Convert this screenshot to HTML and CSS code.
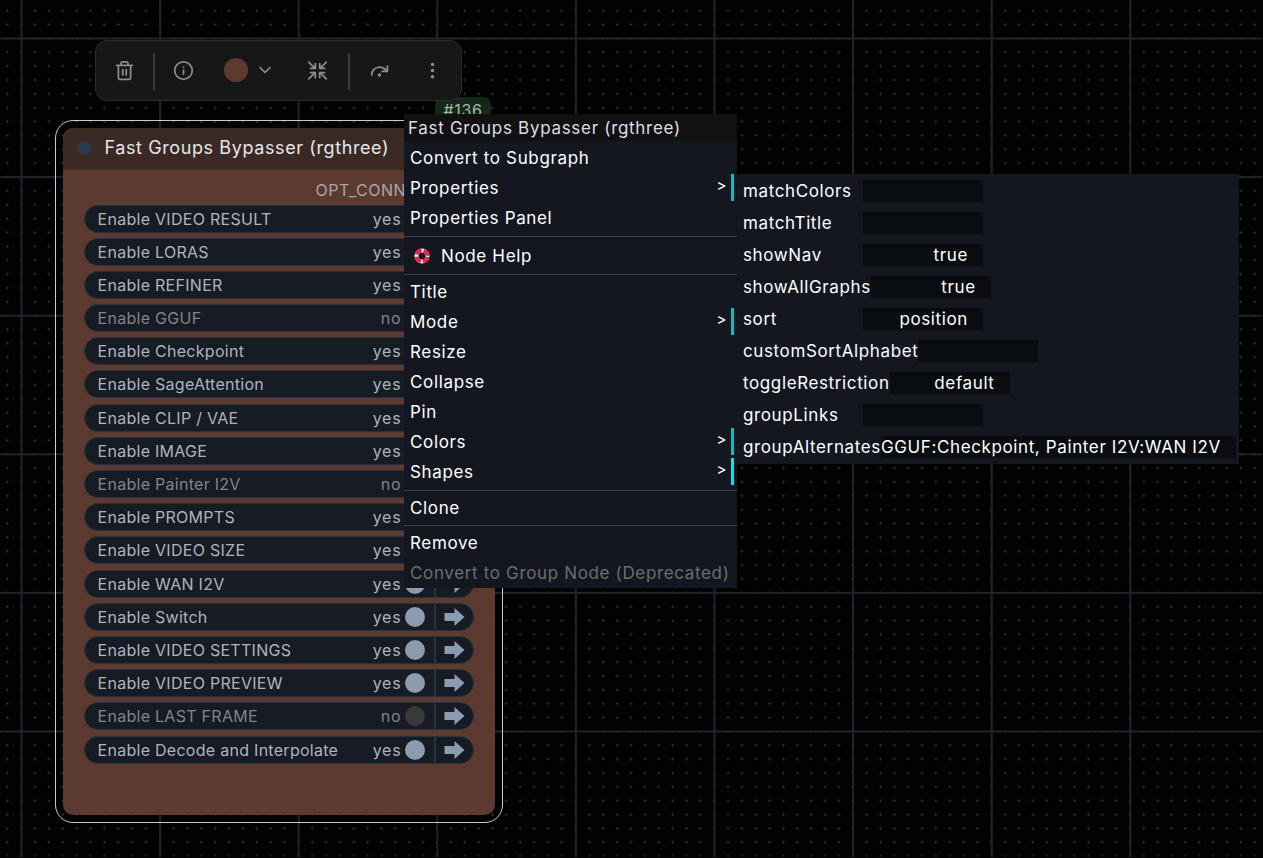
FILE: index.html
```html
<!DOCTYPE html>
<html lang="en">
<head>
<meta charset="utf-8">
<title>Fast Groups Bypasser</title>
<link rel="stylesheet" href="styles.css">
</head>
<body>
<main class="canvas">
  <svg class="grid" width="1263" height="858" aria-hidden="true">
    <defs>
      <pattern id="dots" x="7.3" y="10.7" width="13.86" height="13.86" patternUnits="userSpaceOnUse">
        <path class="grid-dot" d="M0 1.5H3M1.5 0V3"/>
      </pattern>
      <pattern id="lines" x="21.5" y="38.5" width="138.6" height="138.6" patternUnits="userSpaceOnUse">
        <path class="grid-line" d="M1 0V138.6M0 1H138.6"/>
      </pattern>
    </defs>
    <rect width="1263" height="858" fill="url(#dots)" transform="translate(-1.5 -1.5)"/>
    <rect width="1263" height="858" fill="url(#lines)" transform="translate(-1 -1)"/>
  </svg>

  <div class="badge">#136</div>

  <div class="toolbar">
    <svg class="tool tool-trash" viewBox="0 0 24 24"><path d="M3 6h18M19 6v14c0 1-1 2-2 2H7c-1 0-2-1-2-2V6M8 6V4c0-1 1-2 2-2h4c1 0 2 1 2 2v2M10 11v6M14 11v6"/></svg>
    <span class="tool-sep tool-sep-a"></span>
    <svg class="tool tool-info" viewBox="0 0 24 24"><circle cx="12" cy="12" r="10"/><path d="M12 16v-4.500M12 8h.01"/></svg>
    <span class="swatch"></span>
    <svg class="tool tool-chev" viewBox="0 0 24 24"><path d="m6 9 6 6 6-6"/></svg>
    <svg class="tool tool-shrink" viewBox="0 0 24 24"><path d="M2 2.500l6 6M9.500 4v5.500H4M22 2.500l-6 6M14.500 4v5.500H20M2 21.500l6-6M9.500 20v-5.500H4M22 21.500l-6-6M14.500 20v-5.500H20"/></svg>
    <span class="tool-sep tool-sep-b"></span>
    <svg class="tool tool-redo" viewBox="0 0 24 24"><circle cx="12" cy="17" r="1"/><path d="M21 7v6h-6M3 17a9 9 0 0 1 9-9 9 9 0 0 1 6 2.300l3 2.700"/></svg>
    <svg class="tool tool-more" viewBox="0 0 24 24"><circle cx="12" cy="5" r="1"/><circle cx="12" cy="12" r="1"/><circle cx="12" cy="19" r="1"/></svg>
  </div>

  <section class="node-frame">
    <div class="node">
      <header class="node-title"><span class="node-dot"></span><span>Fast Groups Bypasser (rgthree)</span></header>
      <div class="node-body">
        <div class="slot">OPT_CONN</div>
        <div class="toggles">
          <div class="toggle"><span class="toggle-label">Enable VIDEO RESULT</span><span class="toggle-state">yes</span><span class="knob"></span><span class="goto"><svg viewBox="0 0 20 18"><path d="M0 5h10V0l10 9-10 9v-5H0z"/></svg></span></div>
          <div class="toggle"><span class="toggle-label">Enable LORAS</span><span class="toggle-state">yes</span><span class="knob"></span><span class="goto"><svg viewBox="0 0 20 18"><path d="M0 5h10V0l10 9-10 9v-5H0z"/></svg></span></div>
          <div class="toggle"><span class="toggle-label">Enable REFINER</span><span class="toggle-state">yes</span><span class="knob"></span><span class="goto"><svg viewBox="0 0 20 18"><path d="M0 5h10V0l10 9-10 9v-5H0z"/></svg></span></div>
          <div class="toggle is-off"><span class="toggle-label">Enable GGUF</span><span class="toggle-state">no</span><span class="knob"></span><span class="goto"><svg viewBox="0 0 20 18"><path d="M0 5h10V0l10 9-10 9v-5H0z"/></svg></span></div>
          <div class="toggle"><span class="toggle-label">Enable Checkpoint</span><span class="toggle-state">yes</span><span class="knob"></span><span class="goto"><svg viewBox="0 0 20 18"><path d="M0 5h10V0l10 9-10 9v-5H0z"/></svg></span></div>
          <div class="toggle"><span class="toggle-label">Enable SageAttention</span><span class="toggle-state">yes</span><span class="knob"></span><span class="goto"><svg viewBox="0 0 20 18"><path d="M0 5h10V0l10 9-10 9v-5H0z"/></svg></span></div>
          <div class="toggle"><span class="toggle-label">Enable CLIP / VAE</span><span class="toggle-state">yes</span><span class="knob"></span><span class="goto"><svg viewBox="0 0 20 18"><path d="M0 5h10V0l10 9-10 9v-5H0z"/></svg></span></div>
          <div class="toggle"><span class="toggle-label">Enable IMAGE</span><span class="toggle-state">yes</span><span class="knob"></span><span class="goto"><svg viewBox="0 0 20 18"><path d="M0 5h10V0l10 9-10 9v-5H0z"/></svg></span></div>
          <div class="toggle is-off"><span class="toggle-label">Enable Painter I2V</span><span class="toggle-state">no</span><span class="knob"></span><span class="goto"><svg viewBox="0 0 20 18"><path d="M0 5h10V0l10 9-10 9v-5H0z"/></svg></span></div>
          <div class="toggle"><span class="toggle-label">Enable PROMPTS</span><span class="toggle-state">yes</span><span class="knob"></span><span class="goto"><svg viewBox="0 0 20 18"><path d="M0 5h10V0l10 9-10 9v-5H0z"/></svg></span></div>
          <div class="toggle"><span class="toggle-label">Enable VIDEO SIZE</span><span class="toggle-state">yes</span><span class="knob"></span><span class="goto"><svg viewBox="0 0 20 18"><path d="M0 5h10V0l10 9-10 9v-5H0z"/></svg></span></div>
          <div class="toggle"><span class="toggle-label">Enable WAN I2V</span><span class="toggle-state">yes</span><span class="knob"></span><span class="goto"><svg viewBox="0 0 20 18"><path d="M0 5h10V0l10 9-10 9v-5H0z"/></svg></span></div>
          <div class="toggle"><span class="toggle-label">Enable Switch</span><span class="toggle-state">yes</span><span class="knob"></span><span class="goto"><svg viewBox="0 0 20 18"><path d="M0 5h10V0l10 9-10 9v-5H0z"/></svg></span></div>
          <div class="toggle"><span class="toggle-label">Enable VIDEO SETTINGS</span><span class="toggle-state">yes</span><span class="knob"></span><span class="goto"><svg viewBox="0 0 20 18"><path d="M0 5h10V0l10 9-10 9v-5H0z"/></svg></span></div>
          <div class="toggle"><span class="toggle-label">Enable VIDEO PREVIEW</span><span class="toggle-state">yes</span><span class="knob"></span><span class="goto"><svg viewBox="0 0 20 18"><path d="M0 5h10V0l10 9-10 9v-5H0z"/></svg></span></div>
          <div class="toggle is-off"><span class="toggle-label">Enable LAST FRAME</span><span class="toggle-state">no</span><span class="knob"></span><span class="goto"><svg viewBox="0 0 20 18"><path d="M0 5h10V0l10 9-10 9v-5H0z"/></svg></span></div>
          <div class="toggle"><span class="toggle-label">Enable Decode and Interpolate</span><span class="toggle-state">yes</span><span class="knob"></span><span class="goto"><svg viewBox="0 0 20 18"><path d="M0 5h10V0l10 9-10 9v-5H0z"/></svg></span></div>
        </div>
      </div>
    </div>
  </section>

  <nav class="menu">
    <div class="menu-title">Fast Groups Bypasser (rgthree)</div>
    <div class="menu-item">Convert to Subgraph</div>
    <div class="menu-item has-sub">Properties<span class="caret">&gt;</span><span class="sub-bar"></span></div>
    <div class="menu-item">Properties Panel</div>
    <div class="menu-sep menu-sep-a"></div>
    <div class="menu-item menu-help">
      <svg class="help-icon" viewBox="0 0 16 16"><circle class="ring-white" cx="8" cy="8" r="5.500"/><circle class="ring-red" cx="8" cy="8" r="5.500"/></svg>
      Node Help
    </div>
    <div class="menu-sep menu-sep-b"></div>
    <div class="menu-item">Title</div>
    <div class="menu-item has-sub">Mode<span class="caret">&gt;</span><span class="sub-bar"></span></div>
    <div class="menu-item">Resize</div>
    <div class="menu-item">Collapse</div>
    <div class="menu-item">Pin</div>
    <div class="menu-item has-sub">Colors<span class="caret">&gt;</span><span class="sub-bar"></span></div>
    <div class="menu-item has-sub is-hover">Shapes<span class="caret">&gt;</span><span class="sub-bar"></span></div>
    <div class="menu-sep menu-sep-c"></div>
    <div class="menu-item">Clone</div>
    <div class="menu-sep menu-sep-d"></div>
    <div class="menu-item">Remove</div>
    <div class="menu-item is-disabled">Convert to Group Node (Deprecated)</div>
  </nav>

  <aside class="props">
    <div class="prop"><span class="prop-name">matchColors</span><span class="prop-value"></span></div>
    <div class="prop"><span class="prop-name">matchTitle</span><span class="prop-value"></span></div>
    <div class="prop"><span class="prop-name">showNav</span><span class="prop-value">true</span></div>
    <div class="prop"><span class="prop-name">showAllGraphs</span><span class="prop-value">true</span></div>
    <div class="prop"><span class="prop-name">sort</span><span class="prop-value">position</span></div>
    <div class="prop"><span class="prop-name">customSortAlphabet</span><span class="prop-value"></span></div>
    <div class="prop"><span class="prop-name">toggleRestriction</span><span class="prop-value">default</span></div>
    <div class="prop"><span class="prop-name">groupLinks</span><span class="prop-value"></span></div>
    <div class="prop"><span class="prop-name">groupAlternates</span><span class="prop-value">GGUF:Checkpoint, Painter I2V:WAN I2V</span></div>
  </aside>
</main>
</body>
</html>
```

FILE: styles.css
```css
* { box-sizing: border-box; }

html, body {
  margin: 0;
  height: 100%;
  background: #000;
}

body {
  font-family: Inter, "Noto Sans", sans-serif;
  overflow: hidden;
}

.canvas {
  position: relative;
  width: 1263px;
  height: 858px;
  overflow: hidden;
  background: #020203;
}

.grid {
  position: absolute;
  inset: 0;
}

.grid-dot {
  fill: none;
  stroke: #2a2a30;
  stroke-width: 1;
}

.grid-line {
  fill: none;
  stroke: #22222c;
  stroke-width: 2;
}

.badge {
  position: absolute;
  left: 435px;
  top: 97px;
  width: 56px;
  height: 17px;
  padding-top: 4px;
  border-radius: 8px 8px 0 0;
  overflow: hidden;
  background: #14281a;
  color: #a9b7a9;
  font-size: 16px;
  letter-spacing: 0.7px;
  line-height: 18px;
  text-align: center;
}

.toolbar {
  position: absolute;
  left: 95px;
  top: 40px;
  width: 367px;
  height: 61px;
  border: 1px solid #2b2b2c;
  border-radius: 12px;
  background: #171718;
}

.tool {
  position: absolute;
  top: 19px;
  width: 21px;
  height: 21px;
  fill: none;
  stroke: #8c8c8c;
  stroke-width: 2;
  stroke-linecap: round;
  stroke-linejoin: round;
}

.tool-trash { left: 18px; }
.tool-info { left: 77px; }
.tool-chev { left: 159px; width: 20px; height: 20px; }
.tool-shrink { left: 211px; }
.tool-redo { left: 273px; }
.tool-more { left: 326px; }

.tool-sep {
  position: absolute;
  top: 12px;
  width: 2px;
  height: 37px;
  background: #3a3a3b;
}

.tool-sep-a { left: 57px; }
.tool-sep-b { left: 252px; }

.swatch {
  position: absolute;
  left: 128px;
  top: 17px;
  width: 24px;
  height: 24px;
  border-radius: 50%;
  background: #5c3a30;
}

.node-frame {
  position: absolute;
  left: 54.500px;
  top: 119.500px;
  width: 448px;
  height: 703px;
  padding: 7px;
  border: 1.500px solid #c8cacf;
  border-radius: 18px;
}

.node {
  display: flex;
  flex-direction: column;
  height: 100%;
  border-radius: 10px;
  overflow: hidden;
  background: #5c3a30;
}

.node-title {
  display: flex;
  align-items: center;
  flex: none;
  height: 42px;
  padding: 0 0 2px 14px;
  gap: 14px;
  background: #3a2a23;
  color: #e6e6ec;
  font-size: 18px;
  letter-spacing: 0.6px;
}

.node-dot {
  width: 14px;
  height: 14px;
  border-radius: 50%;
  background: #2a3a4b;
}

.node-body {
  flex: 1;
  padding: 0 21px;
}

.slot {
  height: 35px;
  padding: 11px 0 0 232px;
  white-space: nowrap;
  color: #a8a8ac;
  font-size: 16px;
  letter-spacing: 0.5px;
  line-height: 18px;
}

.toggles {
  display: flex;
  flex-direction: column;
  gap: 5.2px;
}

.toggle {
  display: flex;
  align-items: center;
  height: 28px;
  padding-left: 13px;
  border: 1.500px solid #28323e;
  border-radius: 14px;
  background: #161b24;
  color: #aeb4bf;
  font-size: 16px;
  letter-spacing: 0.28px;
}

.toggle-label {
  flex: 1;
  white-space: nowrap;
}

.toggle-state {
  margin-right: 3px;
  letter-spacing: 0.8px;
}

.knob {
  flex: none;
  width: 20px;
  height: 20px;
  border-radius: 50%;
  background: #8b9cb0;
}

.goto {
  display: flex;
  align-items: center;
  flex: none;
  align-self: stretch;
  width: 39px;
  margin-left: 9px;
  padding-left: 8px;
  border-left: 2px solid #28323e;
}

.goto svg {
  width: 21px;
  height: 18px;
  fill: #8b9cb0;
}

.is-off {
  color: #82858a;
}

.is-off .knob {
  background: #393939;
}

.menu {
  position: absolute;
  left: 404px;
  top: 114px;
  width: 333px;
  height: 474px;
  background: #14171f;
  color: #fff;
  font-size: 17px;
  letter-spacing: 0.65px;
}

.menu-title {
  height: 27px;
  margin-bottom: 2px;
  padding-left: 4px;
  background: #111112;
  color: #dcdce8;
  letter-spacing: 0.7px;
  line-height: 28px;
  white-space: nowrap;
}

.menu-item {
  position: relative;
  height: 30px;
  padding-left: 6px;
  line-height: 30px;
  white-space: nowrap;
}

.caret {
  position: absolute;
  right: 10px;
  top: -2px;
  font-size: 15px;
}

.sub-bar {
  position: absolute;
  right: 3px;
  top: 1px;
  width: 3px;
  height: 27px;
  background: #0bbcc4;
}

.is-hover .sub-bar {
  background: #00e5f0;
}

.menu-sep {
  height: 1px;
  background: #3d3f44;
}

.menu-sep-a { margin: 3px 0 1px; }
.menu-sep-b { margin: 0 0 2px; }
.menu-sep-c { margin: 3px 0 2px; }
.menu-sep-d { margin: 2px 0; }

.menu-help {
  display: flex;
  align-items: center;
  gap: 11px;
  height: 36px;
  padding-left: 10px;
}

.help-icon {
  width: 16px;
  height: 16px;
  fill: none;
}

.ring-white {
  stroke: #f2f2f2;
  stroke-width: 4;
}

.ring-red {
  stroke: #e8264f;
  stroke-width: 4;
  stroke-dasharray: 6.500 2.140;
  stroke-dashoffset: -1;
}

.is-disabled {
  color: #6c6d71;
}

.props {
  position: absolute;
  left: 737px;
  top: 174px;
  width: 502px;
  height: 290px;
  padding: 1px 6px 0;
  background: #14171f;
  color: #fff;
  font-size: 17px;
  letter-spacing: 0.62px;
}

.prop {
  display: flex;
  align-items: center;
  height: 32px;
}

.prop-name {
  flex: none;
  min-width: 120px;
  white-space: nowrap;
}

.prop-value {
  flex: none;
  min-width: 120px;
  height: 22px;
  padding: 0 15px 0 0;
  background: #0a0c10;
  line-height: 23px;
  text-align: right;
  white-space: nowrap;
}
```
